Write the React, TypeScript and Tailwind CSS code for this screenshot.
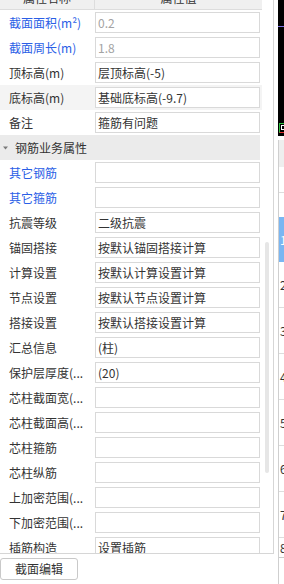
import React from "react";

type Row = {
  label: string;
  value: string;
  blue?: boolean;
  muted?: boolean;
  hover?: boolean;
};

const baseRows: Row[] = [
  { label: "截面面积(m²)", value: "0.2", blue: true, muted: true },
  { label: "截面周长(m)", value: "1.8", blue: true, muted: true },
  { label: "顶标高(m)", value: "层顶标高(-5)" },
  { label: "底标高(m)", value: "基础底标高(-9.7)", hover: true },
  { label: "备注", value: "箍筋有问题" },
];

const rebarRows: Row[] = [
  { label: "其它钢筋", value: "", blue: true },
  { label: "其它箍筋", value: "", blue: true },
  { label: "抗震等级", value: "二级抗震" },
  { label: "锚固搭接", value: "按默认锚固搭接计算" },
  { label: "计算设置", value: "按默认计算设置计算" },
  { label: "节点设置", value: "按默认节点设置计算" },
  { label: "搭接设置", value: "按默认搭接设置计算" },
  { label: "汇总信息", value: "(柱)" },
  { label: "保护层厚度(...", value: "(20)" },
  { label: "芯柱截面宽(...", value: "" },
  { label: "芯柱截面高(...", value: "" },
  { label: "芯柱箍筋", value: "" },
  { label: "芯柱纵筋", value: "" },
  { label: "上加密范围(...", value: "" },
  { label: "下加密范围(...", value: "" },
  { label: "插筋构造", value: "设置插筋" },
];

const PropRow = ({ row }: { row: Row }) => (
  <div
    className={`flex h-[25px] shrink-0 items-center ${
      row.hover ? "bg-[#f4f4f4]" : "bg-white"
    }`}
  >
    <div
      className={`w-[95px] shrink-0 overflow-hidden whitespace-nowrap pl-[9px] leading-[18px] ${
        row.blue ? "text-[#2a5ee6]" : "text-[#333333]"
      }`}
    >
      {row.label}
    </div>
    <div
      className={`mr-[2px] flex h-[21px] flex-1 items-center overflow-hidden whitespace-nowrap border border-[#d9d9d9] bg-white pl-[2px] leading-[18px] ${
        row.muted ? "text-[#a3a3a3]" : "text-[#333333]"
      }`}
    >
      {row.value}
    </div>
  </div>
);

const gridRows = ["2", "3", "4", "5", "6", "7"];

export default function App() {
  return (
    <div className="flex h-[584px] w-[284px] overflow-hidden bg-white font-['Noto_Sans_CJK_SC',sans-serif] text-[12px] leading-[18px]">
      {/* property panel + button */}
      <div className="flex w-[274px] shrink-0 flex-col">
        <div className="flex h-[554px] shrink-0 border-b border-r border-[#d6d6d6]">
          <div className="flex w-[262px] shrink-0 flex-col overflow-hidden">
            {/* header, partly scrolled out */}
            <div className="-mt-[14px] flex h-[24px] shrink-0 border-b border-[#dddddd] bg-[#f0f0f0] text-[#333333]">
              <div className="flex w-[95px] shrink-0 items-center justify-center border-r border-[#dddddd]">
                属性名称
              </div>
              <div className="flex flex-1 items-center justify-center">属性值</div>
            </div>
            {baseRows.map((r) => (
              <PropRow key={r.label} row={r} />
            ))}
            <div className="mr-[2px] flex h-[25px] shrink-0 items-center bg-[#ebebeb] text-[#333333]">
              <svg width="15" height="8" viewBox="0 0 15 8" className="shrink-0">
                <path d="M3 2.5h5l-2.5 3z" fill="#7a7a7a" />
              </svg>
              <span>钢筋业务属性</span>
            </div>
            {rebarRows.map((r) => (
              <PropRow key={r.label} row={r} />
            ))}
          </div>
          {/* scrollbar */}
          <div className="flex flex-1 flex-col pl-[3px]">
            <div className="h-[242px] shrink-0" />
            <div className="h-[231px] w-[4px] rounded-[2px] bg-[#e6e6e6]" />
          </div>
        </div>
        <div className="pt-[4px]">
          <button className="flex h-[22px] w-[78px] items-center justify-center rounded-[3px] border border-[#c9c9c9] bg-white text-[#333333]">
            截面编辑
          </button>
        </div>
      </div>

      {/* neighbouring panel, mostly off-screen */}
      <div className="flex flex-1 flex-col pl-[4px]">
        <div className="flex h-[136px] shrink-0 flex-col bg-black">
          <div className="mt-[26px] h-[1px] bg-[#7b6fe0]" />
          <div className="flex-1" />
          <div className="mb-[3px] ml-[1px] h-[10px] w-[6px] border-l border-t border-b border-[#30c040] border-b-[#e03030] bg-black">
            <div className="ml-[1px] mt-[1px] h-[5px] w-[4px] border border-white" />
          </div>
        </div>
        <div className="mt-[4px] flex flex-1 flex-col border-l border-[#cfcfcf] text-[#333333]">
          <div className="h-[27px] shrink-0 bg-[#eeeeee]" />
          <div className="h-[26px] shrink-0 border-b border-[#dddddd]" />
          <div className="h-[24px] shrink-0" />
          <div className="flex h-[45px] shrink-0 items-center bg-[#7ab6f2] pl-[1px] text-white">1</div>
          {gridRows.map((n) => (
            <div
              key={n}
              className="flex h-[46px] shrink-0 items-center border-b border-[#dddddd] pl-[1px]"
            >
              {n}
            </div>
          ))}
          <div className="flex h-[20px] shrink-0 items-center border-b border-[#cccccc] pl-[1px]">8</div>
        </div>
      </div>
    </div>
  );
}
